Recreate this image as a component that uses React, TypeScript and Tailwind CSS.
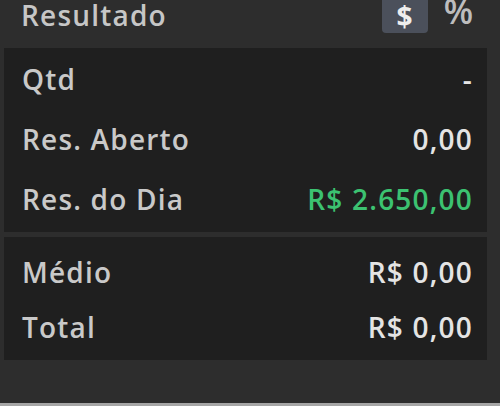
import React from "react";

const font = { fontFamily: '"Open Sans", "Noto Sans", sans-serif' };

function Row({ label, value, green, h }: { label: string; value: string; green?: boolean; h: string }) {
  return (
    <div className={`flex items-center justify-between pl-[18px] pr-[14px] ${h}`}>
      <span className="text-[#c9c9c9]">{label}</span>
      <span className={green ? "text-[#3cc271]" : "text-[#e4e4e4]"}>{value}</span>
    </div>
  );
}

export default function App() {
  return (
    <div
      className="w-[500px] h-[406px] bg-[#2d2d2d] flex flex-col border-b-[3px] border-[#a6a6a6] text-[28px] leading-[38px] font-semibold tracking-[1.2px] overflow-hidden"
      style={font}
    >
      <div className="h-[48px] flex items-start pl-[21px] pr-[27px]">
        <span className="text-[#c6c6c6] -mt-[4px]">Resultado</span>
        <div className="ml-auto flex items-start gap-[16px]">
          <div className="w-[46px] h-[33px] bg-[#4b505b] rounded-b-[4px] flex items-center justify-center text-[#eeeeee] tracking-normal text-[28px] leading-[33px] font-bold">$</div>
          <span className="text-[#bdbdbd] tracking-normal text-[34px] leading-[34px] -mt-[6px]">%</span>
        </div>
      </div>
      <div className="ml-[4px] mr-[13px] bg-[#1f1f1f] pt-[1px] pb-[3px]">
        <Row label="Qtd" value="-" h="h-[60px]" />
        <Row label="Res. Aberto" value="0,00" h="h-[60px]" />
        <Row label="Res. do Dia" value="R$ 2.650,00" green h="h-[60px]" />
      </div>
      <div className="ml-[4px] mr-[13px] mt-[5px] bg-[#1f1f1f] pt-[7px] pb-[6px]">
        <Row label="Médio" value="R$ 0,00" h="h-[55px]" />
        <Row label="Total" value="R$ 0,00" h="h-[55px]" />
      </div>
    </div>
  );
}
